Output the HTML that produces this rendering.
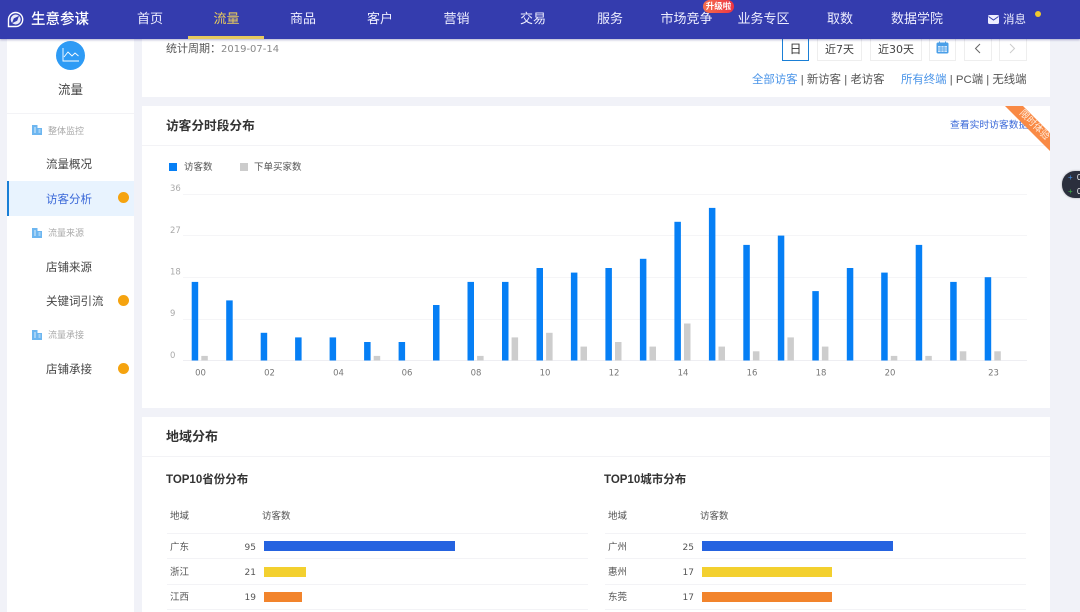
<!DOCTYPE html>
<html lang="zh"><head><meta charset="utf-8"><style>
html,body{margin:0;padding:0;width:1080px;height:612px;overflow:hidden;background:#f1f2f8}
body{position:relative;font-family:"Liberation Sans","Noto Sans CJK SC",sans-serif;color:#333;filter:blur(.3px)}
.a{position:absolute;white-space:nowrap}
.box{position:absolute;background:#fff}
.nav{position:absolute;top:11px;height:16px;line-height:16px;font-size:13px;color:#eef;transform:translateX(-50%);white-space:nowrap}
.btn{position:absolute;top:39px;height:21px;background:#fff;border:1px solid #eee;border-top:none;box-sizing:content-box;text-align:center;font-size:11px;line-height:21px;color:#444;font-family:"DejaVu Sans","Noto Sans CJK SC",sans-serif}
.hr{position:absolute;height:1px;background:#f3f3f6}
.side{position:absolute;left:46px;font-size:11.500px;line-height:16px;color:#444;white-space:nowrap}
.sub{position:absolute;left:48px;font-size:9px;line-height:12px;color:#aaa;white-space:nowrap}
.dot{position:absolute;left:118px;width:11px;height:11px;border-radius:50%;background:#f5a30f}
.t{position:absolute;font-size:9.500px;line-height:12px;color:#555;white-space:nowrap}
.n{position:absolute;font-size:9px;line-height:12px;color:#555;text-align:right;width:20px;font-family:"DejaVu Sans",sans-serif}
.bar{position:absolute;height:10px}
</style></head><body>
<div class="box" style="left:7px;top:39px;width:127px;height:573px"></div>
<div class="box" style="left:142px;top:39px;width:908px;height:58px"></div>
<div class="box" style="left:142px;top:106px;width:908px;height:302px"></div>
<div class="box" style="left:142px;top:417px;width:908px;height:195px"></div>

<!-- Header -->
<div class="a" style="left:0;top:0;width:1080px;height:39px;background:#343cae;box-shadow:0 1px 2px rgba(40,40,120,.35);z-index:5">
<svg class="a" style="left:7px;top:11px" width="17" height="17" viewBox="0 0 17 17"><path d="M8.700 1.500A7 7 0 1 1 8.700 15.500H1.500V8.500A7.200 7.200 0 0 1 8.700 1.500Z" fill="#343cae" stroke="#fff" stroke-width="1.400"/><circle cx="8.700" cy="8.500" r="5" fill="#e8e9f8"/><path d="M5 12.300L6.800 7.400L12 4.900L10.200 9.800Z" fill="#343cae"/></svg>
<div class="a" style="left:31px;top:11px;font-size:14.500px;line-height:18px;color:#fff;font-weight:500">生意参谋</div>
<div class="nav" style="left:150px">首页</div>
<div class="nav" style="left:226.500px;color:#e9cb5c">流量</div>
<div class="nav" style="left:303px">商品</div>
<div class="nav" style="left:380px">客户</div>
<div class="nav" style="left:456.500px">营销</div>
<div class="nav" style="left:533px">交易</div>
<div class="nav" style="left:610px">服务</div>
<div class="nav" style="left:686.500px">市场竞争</div>
<div class="nav" style="left:763.500px">业务专区</div>
<div class="nav" style="left:840px">取数</div>
<div class="nav" style="left:917px">数据学院</div>
<div class="a" style="left:188px;top:36px;width:76px;height:3px;background:#e6c95f"></div>
<div class="a" style="left:703px;top:0;width:31px;height:13px;border-radius:7px;background:linear-gradient(90deg,#f6704c,#ec3344);color:#fff;font-size:8.500px;line-height:12px;text-align:center;font-weight:700">升级啦</div>
<svg class="a" style="left:988px;top:15px" width="11" height="9" viewBox="0 0 11 9"><rect width="11" height="9" rx="1.500" fill="#eef"/><path d="M0.500 1.500L5.500 5L10.500 1.500" fill="none" stroke="#343cae" stroke-width="1"/></svg>
<div class="a" style="left:1003px;top:12px;font-size:11.500px;line-height:16px;color:#eef">消息</div>
<div class="a" style="left:1035px;top:11px;width:6px;height:6px;border-radius:50%;background:#f0c92f"></div>
</div>

<!-- Sidebar -->
<div class="a" style="left:56px;top:41px;width:29px;height:29px;border-radius:50%;background:#2e9bf5"></div>
<svg class="a" style="left:62px;top:47px" width="18" height="17" viewBox="0 0 18 17" fill="none" stroke="#fff" stroke-width=".9"><path d="M1 1V14H17"/><path d="M2 10L6 5L10 9L13 6L16.500 9"/></svg>
<div class="a" style="left:58px;top:82px;font-size:12.500px;line-height:17px;color:#444">流量</div>
<div class="hr" style="left:7px;top:113px;width:127px"></div>
<svg class="a" style="left:32px;top:125px" width="10" height="10" viewBox="0 0 10 10"><path d="M0 10V0H5.500V3H10V10Z" fill="#6db6f0"/><path d="M2 3H4M2 5H4M2 7H4M6.500 5H8.500M6.500 7H8.500" stroke="#fff" stroke-width=".8"/></svg>
<div class="sub" style="top:125px">整体监控</div>
<div class="side" style="top:157px">流量概况</div>
<div class="a" style="left:7px;top:181px;width:127px;height:35px;background:#e8f3fe"></div>
<div class="a" style="left:7px;top:181px;width:2px;height:35px;background:#1a7fd6"></div>
<div class="side" style="top:192px;color:#3a68d8">访客分析</div>
<div class="dot" style="top:192px"></div>
<svg class="a" style="left:32px;top:228px" width="10" height="10" viewBox="0 0 10 10"><path d="M0 10V0H5.500V3H10V10Z" fill="#6db6f0"/><path d="M2 3H4M2 5H4M2 7H4M6.500 5H8.500M6.500 7H8.500" stroke="#fff" stroke-width=".8"/></svg>
<div class="sub" style="top:227px">流量来源</div>
<div class="side" style="top:260px">店铺来源</div>
<div class="side" style="top:294px">关键词引流</div>
<div class="dot" style="top:295px"></div>
<svg class="a" style="left:32px;top:330px" width="10" height="10" viewBox="0 0 10 10"><path d="M0 10V0H5.500V3H10V10Z" fill="#6db6f0"/><path d="M2 3H4M2 5H4M2 7H4M6.500 5H8.500M6.500 7H8.500" stroke="#fff" stroke-width=".8"/></svg>
<div class="sub" style="top:329px">流量承接</div>
<div class="side" style="top:362px">店铺承接</div>
<div class="dot" style="top:363px"></div>

<!-- Card 1 -->
<div class="a" style="left:166px;top:41px;font-size:11px;line-height:16px;color:#555">统计周期：<span style="color:#888;font-size:10px;font-family:'DejaVu Sans',sans-serif">2019-07-14</span></div>
<div class="btn" style="left:782px;width:25px;border:1px solid #1a7fd6;border-top:none;color:#333;font-size:12px">日</div>
<div class="btn" style="left:817px;width:43px">近7天</div>
<div class="btn" style="left:870px;width:50px">近30天</div>
<div class="btn" style="left:929px;width:25px"></div>
<svg class="a" style="left:936px;top:41px" width="13" height="13" viewBox="0 0 13 13"><rect x="0.500" y="1.500" width="12" height="11" rx="1.500" fill="#4a9fe8"/><rect x="2" y="5" width="9" height="6" fill="#cfe5fa"/><path d="M3.500 0.500V3M9.500 0.500V3" stroke="#4a9fe8"/><path d="M2 7H11M2 9H11M5 5V11M8 5V11" stroke="#4a9fe8" stroke-width=".7"/></svg>
<div class="btn" style="left:964px;width:26px"></div>
<svg class="a" style="left:974px;top:43px" width="7" height="11" viewBox="0 0 7 11" fill="none" stroke="#666"><path d="M6 1L1.500 5.500L6 10"/></svg>
<div class="btn" style="left:999px;width:26px"></div>
<svg class="a" style="left:1009px;top:43px" width="7" height="11" viewBox="0 0 7 11" fill="none" stroke="#ccc"><path d="M1 1L5.500 5.500L1 10"/></svg>
<div class="a" style="left:752px;top:72px;font-size:11.400px;line-height:16px;color:#555"><span style="color:#4a94e8">全部访客</span> | 新访客 | 老访客</div>
<div class="a" style="left:901px;top:72px;font-size:11.400px;line-height:16px;color:#555"><span style="color:#4a94e8">所有终端</span> | PC端 | 无线端</div>

<!-- Card 2 -->
<div class="a" style="left:166px;top:117px;font-size:12.700px;line-height:18px;font-weight:700;color:#333">访客分时段分布</div>
<div class="hr" style="left:142px;top:145px;width:908px"></div>
<div class="a" style="left:950px;top:119px;font-size:9.800px;line-height:13px;color:#3a68d8">查看实时访客数据</div>
<svg class="a" style="left:1003px;top:106px" width="47" height="45" viewBox="0 0 47 45"><path d="M2 0H20L47 27V45Z" fill="#f98a45"/><text transform="translate(16 7.500) rotate(45)" x="0" y="0" font-size="9.500" fill="#ffeede" font-family="Liberation Sans,Noto Sans CJK SC,sans-serif">限时体验</text></svg>
<div class="a" style="left:169px;top:163px;width:8px;height:8px;background:#067ff5"></div>
<div class="t" style="left:184px;top:162px;font-size:9.500px">访客数</div>
<div class="a" style="left:239.500px;top:163px;width:8px;height:8px;background:#ccc"></div>
<div class="t" style="left:254px;top:162px;font-size:9.500px">下单买家数</div>
<svg class="a" style="left:0;top:0" width="1080" height="612" viewBox="0 0 1080 612">
<g stroke="#f5f5f7"><path d="M183 194.500H1027M183 235.500H1027M183 277.500H1027M183 319.500H1027"/></g>
<path d="M183 360.500H1027" stroke="#eeeef2"/>
<g fill="#aaa" font-size="8.500" font-family="DejaVu Sans,sans-serif"><text x="170" y="191">36</text><text x="170" y="233">27</text><text x="170" y="274.500">18</text><text x="170" y="316">9</text><text x="170" y="358">0</text></g>
<g fill="#777" font-size="8.500" font-family="DejaVu Sans,sans-serif" text-anchor="middle"><text x="200.500" y="375.500">00</text><text x="269.500" y="375.500">02</text><text x="338.500" y="375.500">04</text><text x="407" y="375.500">06</text><text x="476" y="375.500">08</text><text x="545" y="375.500">10</text><text x="614" y="375.500">12</text><text x="683" y="375.500">14</text><text x="752" y="375.500">16</text><text x="821" y="375.500">18</text><text x="890" y="375.500">20</text><text x="993.500" y="375.500">23</text></g>
<g fill="#067ff5">
<rect x="191.700" y="281.900" width="6.500" height="78.600"/><rect x="226.200" y="300.400" width="6.500" height="60.100"/><rect x="260.700" y="332.800" width="6.500" height="27.700"/><rect x="295.100" y="337.400" width="6.500" height="23.100"/><rect x="329.600" y="337.400" width="6.500" height="23.100"/><rect x="364.100" y="342" width="6.500" height="18.500"/><rect x="398.600" y="342" width="6.500" height="18.500"/><rect x="433" y="305" width="6.500" height="55.500"/><rect x="467.500" y="281.900" width="6.500" height="78.600"/><rect x="502" y="281.900" width="6.500" height="78.600"/><rect x="536.500" y="268" width="6.500" height="92.500"/><rect x="570.900" y="272.600" width="6.500" height="87.900"/><rect x="605.400" y="268" width="6.500" height="92.500"/><rect x="639.900" y="258.800" width="6.500" height="101.700"/><rect x="674.400" y="221.800" width="6.500" height="138.700"/><rect x="708.900" y="207.900" width="6.500" height="152.600"/><rect x="743.300" y="244.900" width="6.500" height="115.600"/><rect x="777.800" y="235.600" width="6.500" height="124.900"/><rect x="812.300" y="291.100" width="6.500" height="69.400"/><rect x="846.800" y="268" width="6.500" height="92.500"/><rect x="881.200" y="272.600" width="6.500" height="87.900"/><rect x="915.700" y="244.900" width="6.500" height="115.600"/><rect x="950.200" y="281.900" width="6.500" height="78.600"/><rect x="984.700" y="277.200" width="6.500" height="83.300"/>
</g>
<g fill="#cdcdcd">
<rect x="201.300" y="355.900" width="6.500" height="4.600"/><rect x="373.700" y="355.900" width="6.500" height="4.600"/><rect x="477.100" y="355.900" width="6.500" height="4.600"/><rect x="511.600" y="337.400" width="6.500" height="23.100"/><rect x="546.100" y="332.800" width="6.500" height="27.700"/><rect x="580.500" y="346.600" width="6.500" height="13.900"/><rect x="615" y="342" width="6.500" height="18.500"/><rect x="649.500" y="346.600" width="6.500" height="13.900"/><rect x="684" y="323.500" width="6.500" height="37"/><rect x="718.500" y="346.600" width="6.500" height="13.900"/><rect x="752.900" y="351.300" width="6.500" height="9.200"/><rect x="787.400" y="337.400" width="6.500" height="23.100"/><rect x="821.900" y="346.600" width="6.500" height="13.900"/><rect x="890.800" y="355.900" width="6.500" height="4.600"/><rect x="925.300" y="355.900" width="6.500" height="4.600"/><rect x="959.800" y="351.300" width="6.500" height="9.200"/><rect x="994.300" y="351.300" width="6.500" height="9.200"/>
</g>
</svg>

<!-- Floating widget -->
<div class="a" style="left:1062px;top:171px;width:30px;height:27px;border-radius:13px;background:#2b2f3d;box-shadow:0 0 2px rgba(0,0,0,.3)"></div>
<div class="a" style="left:1068px;top:171px;font-size:8px;line-height:13px;color:#4a94e8">+</div>
<div class="a" style="left:1068px;top:185px;font-size:8px;line-height:13px;color:#3cb043">+</div>
<div class="a" style="left:1077px;top:171px;font-size:8px;line-height:13px;color:#fff">0</div>
<div class="a" style="left:1077px;top:185px;font-size:8px;line-height:13px;color:#fff">0</div>

<!-- Card 3 -->
<div class="a" style="left:166px;top:428px;font-size:13px;line-height:18px;font-weight:700;color:#333">地域分布</div>
<div class="hr" style="left:142px;top:456px;width:908px"></div>
<div class="a" style="left:166px;top:472px;font-size:11.500px;line-height:17px;font-weight:700;color:#333">TOP10省份分布</div>
<div class="t" style="left:170px;top:511px">地域</div><div class="t" style="left:262px;top:511px">访客数</div>
<div class="hr" style="left:167px;top:533px;width:421px"></div>
<div class="t" style="left:170px;top:542px">广东</div><div class="n" style="left:236px;top:542px">95</div><div class="bar" style="left:264px;top:541px;width:191px;background:#2563e0"></div>
<div class="hr" style="left:167px;top:558px;width:421px"></div>
<div class="t" style="left:170px;top:567px">浙江</div><div class="n" style="left:236px;top:567px">21</div><div class="bar" style="left:264px;top:567px;width:42px;background:#f3d02f"></div>
<div class="hr" style="left:167px;top:584px;width:421px"></div>
<div class="t" style="left:170px;top:592px">江西</div><div class="n" style="left:236px;top:592px">19</div><div class="bar" style="left:264px;top:592px;width:38px;background:#f2842c"></div>
<div class="hr" style="left:167px;top:609px;width:421px"></div>

<div class="a" style="left:604px;top:472px;font-size:11.500px;line-height:17px;font-weight:700;color:#333">TOP10城市分布</div>
<div class="t" style="left:608px;top:511px">地域</div><div class="t" style="left:700px;top:511px">访客数</div>
<div class="hr" style="left:605px;top:533px;width:421px"></div>
<div class="t" style="left:608px;top:542px">广州</div><div class="n" style="left:674px;top:542px">25</div><div class="bar" style="left:701.500px;top:541px;width:191px;background:#2563e0"></div>
<div class="hr" style="left:605px;top:558px;width:421px"></div>
<div class="t" style="left:608px;top:567px">惠州</div><div class="n" style="left:674px;top:567px">17</div><div class="bar" style="left:701.500px;top:567px;width:130px;background:#f3d02f"></div>
<div class="hr" style="left:605px;top:584px;width:421px"></div>
<div class="t" style="left:608px;top:592px">东莞</div><div class="n" style="left:674px;top:592px">17</div><div class="bar" style="left:701.500px;top:592px;width:130px;background:#f2842c"></div>
<div class="hr" style="left:605px;top:609px;width:421px"></div>
</body></html>
